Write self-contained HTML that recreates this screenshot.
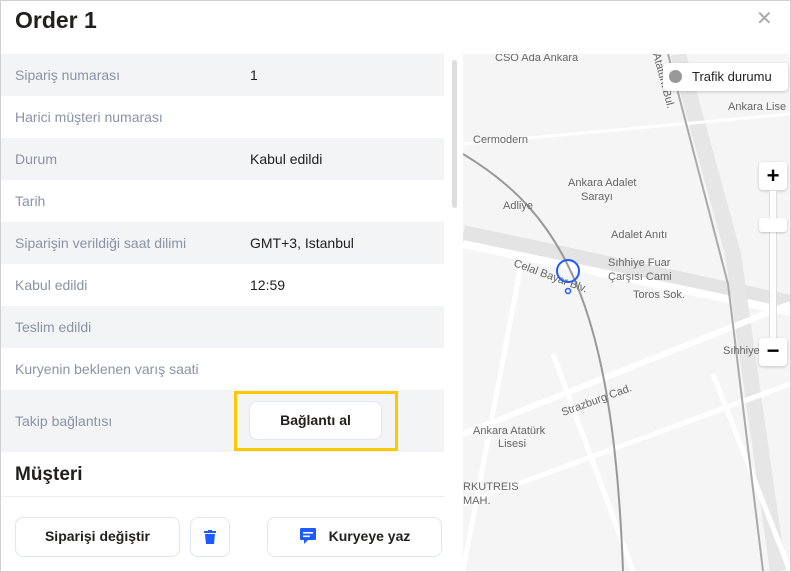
<!DOCTYPE html>
<html><head><meta charset="utf-8"><style>
body{margin:0;width:791px;height:572px;overflow:hidden;background:#fff;font-family:"Liberation Sans",sans-serif;position:relative}
.frame{position:absolute;left:0;top:0;width:789px;height:570px;border:1px solid #d0d0d0}
h1{position:absolute;left:15px;top:7px;margin:0;font-size:23px;font-weight:bold;color:#21201f}
.x{position:absolute;left:756px;top:6px;font-size:20px;color:#aaa}
.row{position:absolute;left:1px;width:443px;height:42px;font-size:14px}
.row.g{background:#f3f4f6}
.row .l{position:absolute;left:14px;top:13px;color:#8a93a6}
.row .v{position:absolute;left:249px;top:13px;color:#21201f}
.btn{position:absolute;border:1px solid #dfe6f3;border-radius:8px;background:#fff;font-size:14px;font-weight:bold;color:#21201f;text-align:center;line-height:37px;box-sizing:border-box}
.map{position:absolute;left:463px;top:54px;width:327px;height:517px;background:#f5f5f5;overflow:hidden}
.map text{font-family:"Liberation Sans",sans-serif;fill:#666;font-size:11px}
</style></head><body>
<div class="frame"></div>
<h1>Order 1</h1>
<div class="x">✕</div>
<div class="row g" style="top:54px"><span class="l">Sipariş numarası</span><span class="v">1</span></div>
<div class="row" style="top:96px"><span class="l">Harici müşteri numarası</span></div>
<div class="row g" style="top:138px"><span class="l">Durum</span><span class="v">Kabul edildi</span></div>
<div class="row" style="top:180px"><span class="l">Tarih</span></div>
<div class="row g" style="top:222px"><span class="l">Siparişin verildiği saat dilimi</span><span class="v">GMT+3, Istanbul</span></div>
<div class="row" style="top:264px"><span class="l">Kabul edildi</span><span class="v">12:59</span></div>
<div class="row g" style="top:306px"><span class="l">Teslim edildi</span></div>
<div class="row" style="top:348px"><span class="l">Kuryenin beklenen varış saati</span></div>
<div class="row g" style="top:390px;height:62px"><span class="l" style="top:23px">Takip bağlantısı</span></div>
<div style="position:absolute;left:234px;top:391px;width:164px;height:60px;border:3px solid #fcc800;box-sizing:border-box"></div>
<div class="btn" style="left:249px;top:401px;width:133px;height:39px">Bağlantı al</div>
<div style="position:absolute;left:452px;top:60px;width:5px;height:148px;background:#ddd;border-radius:3px"></div>
<div style="position:absolute;left:15px;top:464px;font-size:19px;font-weight:bold;color:#21201f">Müşteri</div>
<div style="position:absolute;left:1px;top:496px;width:443px;height:1px;background:#eee"></div>
<div class="btn" style="left:15px;top:517px;width:165px;height:40px">Siparişi değiştir</div>
<div class="btn" style="left:190px;top:517px;width:40px;height:40px"><svg width="12" height="14" viewBox="0 0 12 14" style="margin-top:12px"><rect x="0" y="1" width="12" height="2" fill="#1e5bff"/><rect x="4" y="0" width="4" height="2" fill="#1e5bff"/><path d="M1 4h10l-1 10H2z" fill="#1e5bff"/></svg></div>
<div class="btn" style="left:267px;top:517px;width:175px;height:40px"><svg width="18" height="18" viewBox="0 0 18 18" style="vertical-align:-4px;margin-right:12px"><path d="M2 1h14a1 1 0 0 1 1 1v10a1 1 0 0 1-1 1H9l-4 4v-4H2a1 1 0 0 1-1-1V2a1 1 0 0 1 1-1z" fill="#1e5bff"/><rect x="4" y="5" width="10" height="1.6" fill="#fff"/><rect x="4" y="8.5" width="7" height="1.6" fill="#fff"/></svg>Kuryeye yaz</div>
<div class="map"><svg width="327" height="517">
<g stroke="#fff" fill="none">
<path d="M0 180 L327 250" stroke-width="18" stroke="#e4e4e4"/>
<path d="M0 190 L327 258" stroke-width="8"/>
<path d="M215 0 L270 200 L315 517" stroke-width="16" stroke="#e6e6e6"/>
<path d="M0 380 L327 250" stroke-width="6"/>
<path d="M0 450 L327 330" stroke-width="5"/>
<path d="M60 200 L0 517" stroke-width="5"/>
<path d="M90 300 L170 517" stroke-width="5"/>
<path d="M250 320 L327 517" stroke-width="5"/>
<path d="M0 90 L327 60" stroke-width="3"/>
</g>
<path d="M0 100 C100 160 150 250 160 517" stroke="#999" stroke-width="2" fill="none"/>
<path d="M205 0 L265 230 L300 517" stroke="#aaa" stroke-width="2" fill="none"/>
<text x="32" y="7">CSO Ada Ankara</text><text x="10" y="89">Cermodern</text>
<text x="105" y="132">Ankara Adalet</text><text x="118" y="146">Sarayı</text>
<text x="40" y="155" font-size="13" fill="#333">Adliye</text>
<text x="148" y="184">Adalet Anıtı</text><text x="145" y="212">Sıhhiye Fuar</text><text x="145" y="226">Çarşısı Cami</text>
<text x="170" y="244">Toros Sok.</text><text x="100" y="362" transform="rotate(-20 100 362)">Strazburg Cad.</text>
<text x="50" y="212" font-size="13" fill="#333" transform="rotate(20 50 212)">Celal Bayar Blv.</text>
<text x="260" y="300" font-size="12" fill="#333">Sıhhiye</text>
<text x="10" y="380">Ankara Atatürk</text><text x="35" y="393">Lisesi</text>
<text x="0" y="436">RKUTREIS</text><text x="0" y="450">MAH.</text>
<text x="190" y="0" transform="rotate(75 190 0)" fill="#555">Atatürk Bul.</text>
<text x="265" y="56">Ankara Lise</text>
<circle cx="105" cy="217" r="11" fill="none" stroke="#1e5bff" stroke-width="2"/><circle cx="105" cy="237" r="2.5" fill="none" stroke="#1e5bff" stroke-width="1.5"/>
</svg>
<div style="position:absolute;left:200px;top:9px;width:125px;height:28px;background:#fff;border-radius:4px;box-shadow:0 1px 3px rgba(0,0,0,.2);font-size:13px;line-height:28px;color:#222"><span style="display:inline-block;width:13px;height:13px;border-radius:50%;background:#999;vertical-align:-2px;margin:0 10px 0 6px"></span>Trafik durumu</div>
<div style="position:absolute;left:296px;top:108px;width:28px;height:28px;background:#fff;border-radius:4px;box-shadow:0 1px 3px rgba(0,0,0,.2);text-align:center;font-size:22px;font-weight:bold;line-height:28px">+</div>
<div style="position:absolute;left:306px;top:136px;width:6px;height:160px;background:#fff;border:1px solid #ddd"></div>
<div style="position:absolute;left:296px;top:164px;width:28px;height:14px;background:#fff;border-radius:3px;box-shadow:0 1px 2px rgba(0,0,0,.2)"></div>
<div style="position:absolute;left:296px;top:284px;width:28px;height:28px;background:#fff;border-radius:4px;box-shadow:0 1px 3px rgba(0,0,0,.2);text-align:center;font-size:22px;font-weight:bold;line-height:26px">−</div>
</div>
</body></html>
